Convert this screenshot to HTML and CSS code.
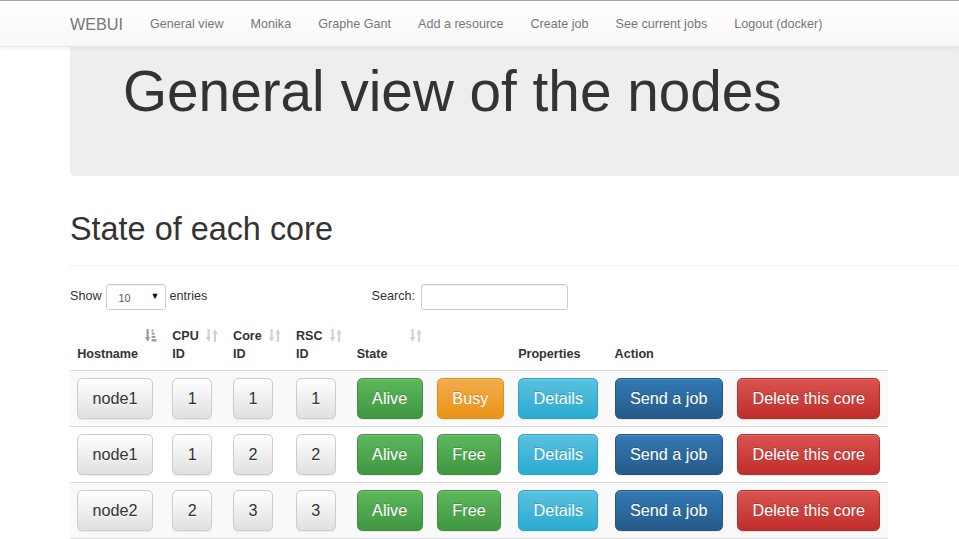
FILE: index.html
```html
<!DOCTYPE html>
<html lang="en">
<head>
<meta charset="utf-8">
<title>General view of the nodes</title>
<link rel="stylesheet" href="styles.css">
</head>
<body>
<nav class="navbar">
  <div class="container nav-inner">
    <a class="brand" href="#">WEBUI</a>
    <ul class="nav">
      <li><a href="#">General view</a></li>
      <li><a href="#">Monika</a></li>
      <li><a href="#">Graphe Gant</a></li>
      <li><a href="#">Add a resource</a></li>
      <li><a href="#">Create job</a></li>
      <li><a href="#">See current jobs</a></li>
      <li><a href="#">Logout (docker)</a></li>
    </ul>
  </div>
</nav>

<div class="container">
  <div class="jumbotron">
    <h1>General view of the nodes</h1>
  </div>

  <div class="page-header">
    <h1>State of each core</h1>
  </div>

  <div class="toolbar">
    <label class="length">Show
      <span class="select-wrap"><select class="select"><option>10</option><option>25</option><option>50</option><option>100</option></select></span>
      entries</label>
    <label class="filter">Search:<input class="search" type="search"></label>
  </div>

  <table class="grid">
    <thead>
      <tr>
        <th class="sort"><span>Hostname</span>
          <svg class="sort-icon sorted" viewBox="0 0 12 13" aria-hidden="true"><rect x="1.5" y="0" width="2.2" height="8.5"/><polygon points="0,8 5.2,8 2.6,12.8"/><rect x="6.6" y="0.5" width="1.8" height="2"/><rect x="6.6" y="3.7" width="2.8" height="2"/><rect x="6.6" y="6.9" width="3.8" height="2"/><rect x="6.6" y="10.1" width="4.8" height="2.4"/></svg>
        </th>
        <th class="sort"><span>CPU ID</span>
          <svg class="sort-icon" viewBox="0 0 12 13" aria-hidden="true"><rect x="1.5" y="0" width="2.2" height="8.5"/><polygon points="0,8 5.2,8 2.6,12.8"/><polygon points="6.4,4.8 11.6,4.8 9,0"/><rect x="7.9" y="4.3" width="2.2" height="8.7"/></svg>
        </th>
        <th class="sort"><span>Core ID</span>
          <svg class="sort-icon" viewBox="0 0 12 13" aria-hidden="true"><rect x="1.5" y="0" width="2.2" height="8.5"/><polygon points="0,8 5.2,8 2.6,12.8"/><polygon points="6.4,4.8 11.6,4.8 9,0"/><rect x="7.9" y="4.3" width="2.2" height="8.7"/></svg>
        </th>
        <th class="sort"><span>RSC ID</span>
          <svg class="sort-icon" viewBox="0 0 12 13" aria-hidden="true"><rect x="1.5" y="0" width="2.2" height="8.5"/><polygon points="0,8 5.2,8 2.6,12.8"/><polygon points="6.4,4.8 11.6,4.8 9,0"/><rect x="7.9" y="4.3" width="2.2" height="8.7"/></svg>
        </th>
        <th class="sort"><span>State</span>
          <svg class="sort-icon" viewBox="0 0 12 13" aria-hidden="true"><rect x="1.5" y="0" width="2.2" height="8.5"/><polygon points="0,8 5.2,8 2.6,12.8"/><polygon points="6.4,4.8 11.6,4.8 9,0"/><rect x="7.9" y="4.3" width="2.2" height="8.7"/></svg>
        </th>
        <th></th>
        <th>Properties</th>
        <th>Action</th>
        <th></th>
      </tr>
    </thead>
    <tbody>
      <tr>
        <td><button class="btn btn-default">node1</button></td>
        <td><button class="btn btn-default">1</button></td>
        <td><button class="btn btn-default">1</button></td>
        <td><button class="btn btn-default">1</button></td>
        <td><button class="btn btn-success">Alive</button></td>
        <td><button class="btn btn-warning">Busy</button></td>
        <td><button class="btn btn-info">Details</button></td>
        <td><button class="btn btn-primary">Send a job</button></td>
        <td><button class="btn btn-danger">Delete this core</button></td>
      </tr>
      <tr>
        <td><button class="btn btn-default">node1</button></td>
        <td><button class="btn btn-default">1</button></td>
        <td><button class="btn btn-default">2</button></td>
        <td><button class="btn btn-default">2</button></td>
        <td><button class="btn btn-success">Alive</button></td>
        <td><button class="btn btn-success">Free</button></td>
        <td><button class="btn btn-info">Details</button></td>
        <td><button class="btn btn-primary">Send a job</button></td>
        <td><button class="btn btn-danger">Delete this core</button></td>
      </tr>
      <tr>
        <td><button class="btn btn-default">node2</button></td>
        <td><button class="btn btn-default">2</button></td>
        <td><button class="btn btn-default">3</button></td>
        <td><button class="btn btn-default">3</button></td>
        <td><button class="btn btn-success">Alive</button></td>
        <td><button class="btn btn-success">Free</button></td>
        <td><button class="btn btn-info">Details</button></td>
        <td><button class="btn btn-primary">Send a job</button></td>
        <td><button class="btn btn-danger">Delete this core</button></td>
      </tr>
    </tbody>
  </table>
</div>
</body>
</html>
```
FILE: styles.css
```css
html {
  overflow: hidden;
}

body {
  margin: 0;
  font-family: "Liberation Sans", Arial, sans-serif;
  font-size: 12.6px;
  line-height: 1.42857;
  color: #333;
  background: #fff;
}

a {
  text-decoration: none;
}

.container {
  width: 1026px;
  margin-left: 70px;
}

/* ---------- navbar ---------- */
.navbar {
  border-top: 1px solid #a4a4a4;
  border-bottom: 1px solid #e7e7e7;
  background-image: linear-gradient(to bottom, #fff 0, #f8f8f8 100%);
  box-shadow: inset 0 1px 0 rgba(255, 255, 255, .15), 0 1px 5px rgba(0, 0, 0, .075);
  position: relative;
  z-index: 2;
}

.nav-inner {
  display: flex;
  align-items: stretch;
  height: 45px;
}

.brand {
  margin-left: -13.5px;
  padding: 13.5px;
  font-size: 16.2px;
  line-height: 18px;
  color: #777;
  text-shadow: 0 1px 0 rgba(255, 255, 255, .25);
}

.nav {
  display: flex;
  list-style: none;
  margin: 0;
  padding: 0;
}

.nav a {
  display: block;
  padding: 13.5px;
  line-height: 18px;
  color: #777;
  text-shadow: 0 1px 0 rgba(255, 255, 255, .25);
}

/* ---------- jumbotron ---------- */
.jumbotron {
  background: #eee;
  padding: 14px 53px 43.5px;
  border-radius: 0 0 0 5.4px;
}

.jumbotron h1 {
  margin: 0 0 9px;
  font-size: 56.7px;
  font-weight: 500;
  line-height: 1.1;
  color: #333;
}

/* ---------- page header ---------- */
.page-header {
  margin: 36px 0 18px;
  padding-bottom: 8.1px;
  border-bottom: 1px solid #eee;
}

.page-header h1 {
  margin: 0 0 9px;
  font-size: 32.4px;
  font-weight: 500;
  line-height: 1.1;
}

/* ---------- toolbar ---------- */
.toolbar {
  width: 498px;
  height: 27px;
  display: flex;
  justify-content: space-between;
  align-items: center;
}

.length,
.filter {
  display: flex;
  align-items: center;
  font-weight: normal;
}

.select-wrap {
  position: relative;
  display: inline-block;
  margin: 0 4px;
}

.select {
  appearance: none;
  -webkit-appearance: none;
  width: 60px;
  height: 26px;
  padding: 2px 10px 0 12px;
  font-family: "Liberation Sans", Arial, sans-serif;
  font-size: 10.8px;
  color: #555;
  background: #fff;
  border: 1px solid #ccc;
  border-radius: 2.7px;
  box-shadow: inset 0 1px 1px rgba(0, 0, 0, .075);
}

.select-wrap::after {
  content: "\25BC";
  position: absolute;
  right: 6px;
  top: 7px;
  font-size: 9px;
  line-height: 11px;
  color: #111;
  pointer-events: none;
}

.search {
  width: 147px;
  height: 26px;
  box-sizing: border-box;
  margin-left: 6px;
  padding: 4px 8px;
  font-family: "Liberation Sans", Arial, sans-serif;
  font-size: 10.8px;
  border: 1px solid #ccc;
  border-radius: 2.7px;
  box-shadow: inset 0 1px 1px rgba(0, 0, 0, .075);
}

/* ---------- table ---------- */
.grid {
  width: 1px;
  margin-top: 9px;
  border-collapse: collapse;
  border-bottom: 1px solid #ddd;
}

.grid th {
  position: relative;
  padding: 7px 27px 7px 7.2px;
  text-align: left;
  vertical-align: bottom;
  font-weight: bold;
  line-height: 18px;
}

.sort-icon {
  position: absolute;
  top: 9px;
  right: 8px;
  width: 12px;
  height: 13px;
  fill: #d2d2d2;
}

.sort-icon.sorted {
  fill: #999;
}

.grid td {
  padding: 7px 7.2px;
  border-top: 1px solid #ddd;
  vertical-align: top;
}

.grid tbody tr:nth-child(odd) td {
  background: #f9f9f9;
}

/* ---------- buttons ---------- */
.btn {
  display: inline-block;
  box-sizing: border-box;
  height: 41px;
  padding: 9px 14.4px;
  font-family: "Liberation Sans", Arial, sans-serif;
  font-size: 16.2px;
  line-height: 21px;
  white-space: nowrap;
  border: 1px solid transparent;
  border-radius: 5.4px;
  color: #fff;
  text-shadow: 0 -1px 0 rgba(0, 0, 0, .2);
  box-shadow: inset 0 1px 0 rgba(255, 255, 255, .15), 0 1px 1px rgba(0, 0, 0, .075);
  cursor: pointer;
}

.btn-default {
  color: #333;
  text-shadow: 0 1px 0 #fff;
  background-image: linear-gradient(to bottom, #fff 0, #e0e0e0 100%);
  border-color: #ccc;
}

.btn-success {
  background-image: linear-gradient(to bottom, #5cb85c 0, #419641 100%);
  border-color: #3e8f3e;
}

.btn-warning {
  background-image: linear-gradient(to bottom, #f0ad4e 0, #eb9316 100%);
  border-color: #e38d13;
}

.btn-info {
  background-image: linear-gradient(to bottom, #5bc0de 0, #2aabd2 100%);
  border-color: #28a4c9;
}

.btn-primary {
  background-image: linear-gradient(to bottom, #337ab7 0, #265a88 100%);
  border-color: #245580;
}

.btn-danger {
  background-image: linear-gradient(to bottom, #d9534f 0, #c12e2a 100%);
  border-color: #b92c28;
}
```
